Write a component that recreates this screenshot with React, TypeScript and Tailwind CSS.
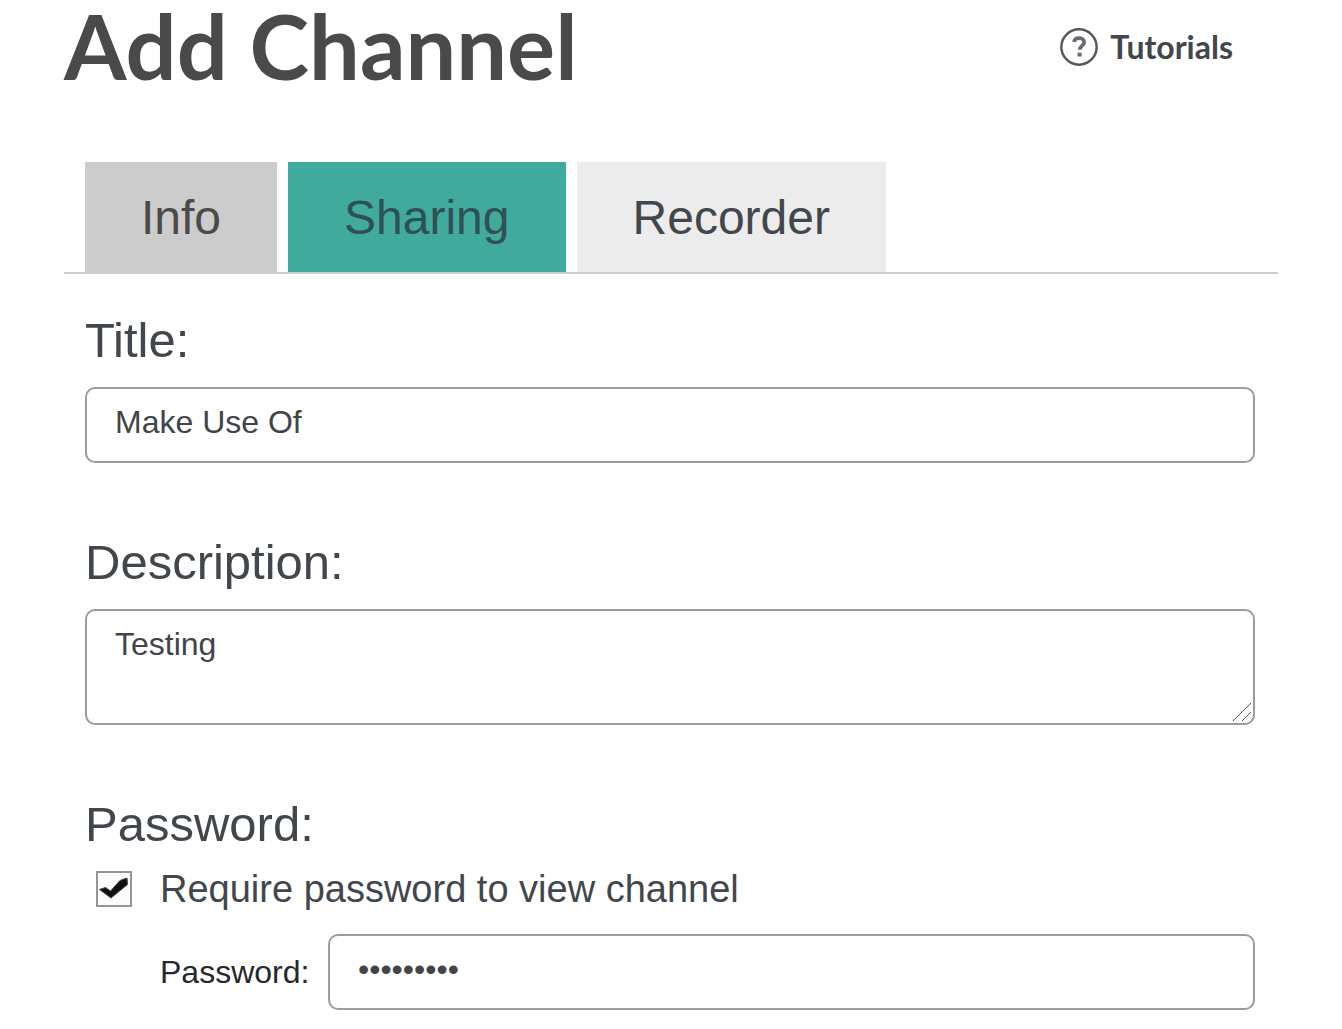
import { useState } from "react";

function HelpIcon() {
  return (
    <svg className="size-[38px]" viewBox="0 0 40 40" fill="none" aria-hidden="true">
      <circle cx="20" cy="20" r="18.6" stroke="#55595d" strokeWidth="2.6" />
      <path
        d="M14.8 14.8c.3-2.9 2.2-4.2 5.2-4.2 3.2 0 5.4 1.6 5.4 4.3 0 3.8-4.6 3.7-4.6 8.1"
        stroke="#686d73"
        strokeWidth="4"
      />
      <rect x="18.4" y="26" width="4.4" height="4" fill="#686d73" />
    </svg>
  );
}

function CheckMark() {
  return (
    <svg
      className="pointer-events-none absolute inset-0 size-9"
      viewBox="0 0 36 36"
      aria-hidden="true"
    >
      <path
        d="M3.5 18.5 9.5 16.5 14.5 20 24 9.5 31 7 31.5 13.5 15 27Z"
        fill="#111"
        stroke="#444"
        strokeWidth="1"
        strokeLinejoin="round"
      />
    </svg>
  );
}

const fieldClass =
  "block w-full rounded-[10px] border-2 border-[#9c9c9c] bg-white px-7 text-[32px] leading-9 text-[#414549] outline-none";
const labelClass = "block w-fit text-[49px] leading-[60px]";
const tabClass = "h-[110px] px-14 pt-[2px]";

export default function App() {
  const [tab, setTab] = useState("Sharing");
  const [title, setTitle] = useState("Make Use Of");
  const [description, setDescription] = useState("Testing");
  const [locked, setLocked] = useState(true);
  const [password, setPassword] = useState("makeuseof");

  return (
    <main className="min-h-screen bg-white px-16 pb-5 font-['Liberation_Sans',Arial,sans-serif] text-[#41474c]">
      <header className="flex items-start justify-between pr-[45px] pb-[72px] font-['Lato',sans-serif]">
        <h1 className="text-[90px] leading-[90px] font-bold text-[#4a4a4a]">
          Add Channel
        </h1>
        <a
          href="#tutorials"
          className="mt-[27px] flex items-center gap-3 text-[32px] leading-10 font-bold"
        >
          <HelpIcon />
          Tutorials
        </a>
      </header>

      <nav className="flex gap-[11px] border-b-2 border-[#cccccc] pl-[21px] text-[48px]">
        <button
          type="button"
          onClick={() => setTab("Info")}
          className={`${tabClass} bg-[#cccccc] text-[#4a4a4a]`}
        >
          Info
        </button>
        <button
          type="button"
          aria-pressed={tab === "Sharing"}
          onClick={() => setTab("Sharing")}
          className={`${tabClass} bg-[#40aa9d] text-[#2f5056]`}
        >
          Sharing
        </button>
        <button
          type="button"
          onClick={() => setTab("Recorder")}
          className={`${tabClass} bg-[#ececec]`}
        >
          Recorder
        </button>
      </nav>

      <form className="flex flex-col gap-[69px] pt-9 pr-[23px] pl-[21px]">
        <div className="flex flex-col gap-[17px]">
          <label htmlFor="title" className={labelClass}>
            Title:
          </label>
          <input
            id="title"
            type="text"
            value={title}
            onChange={(e) => setTitle(e.target.value)}
            className={`${fieldClass} h-[76px] pb-1.5`}
          />
        </div>

        <div className="flex flex-col gap-[17px]">
          <label htmlFor="description" className={labelClass}>
            Description:
          </label>
          <div className="relative">
            <textarea
              id="description"
              value={description}
              onChange={(e) => setDescription(e.target.value)}
              className={`${fieldClass} h-[116px] resize-none pt-[15px]`}
            />
            <svg
              className="pointer-events-none absolute right-1 bottom-1 size-[18px]"
              viewBox="0 0 18 18"
              stroke="#555"
              aria-hidden="true"
            >
              <path d="M0 18 18 0M9 18l9-9" />
            </svg>
          </div>
        </div>

        <fieldset>
          <legend className={labelClass}>Password:</legend>
          <div className="flex items-center gap-7 pt-[17px] pl-[11px]">
            <span className="relative size-9 shrink-0">
              <input
                id="locked"
                type="checkbox"
                checked={locked}
                onChange={(e) => setLocked(e.target.checked)}
                className="block size-9 appearance-none border-2 border-[#959595] bg-[#fcfcfc]"
              />
              {locked && <CheckMark />}
            </span>
            <label htmlFor="locked" className="text-[38px] leading-9">
              Require password to view channel
            </label>
          </div>
          <div className="flex items-center gap-3 pt-[27px] pl-[75px]">
            <label
              htmlFor="password"
              className="w-[156px] shrink-0 text-[32px] text-[#25292c]"
            >
              Password:
            </label>
            <input
              id="password"
              type="password"
              value={password}
              onChange={(e) => setPassword(e.target.value)}
              className={`${fieldClass} h-[76px] pb-1.5`}
            />
          </div>
        </fieldset>
      </form>
    </main>
  );
}
